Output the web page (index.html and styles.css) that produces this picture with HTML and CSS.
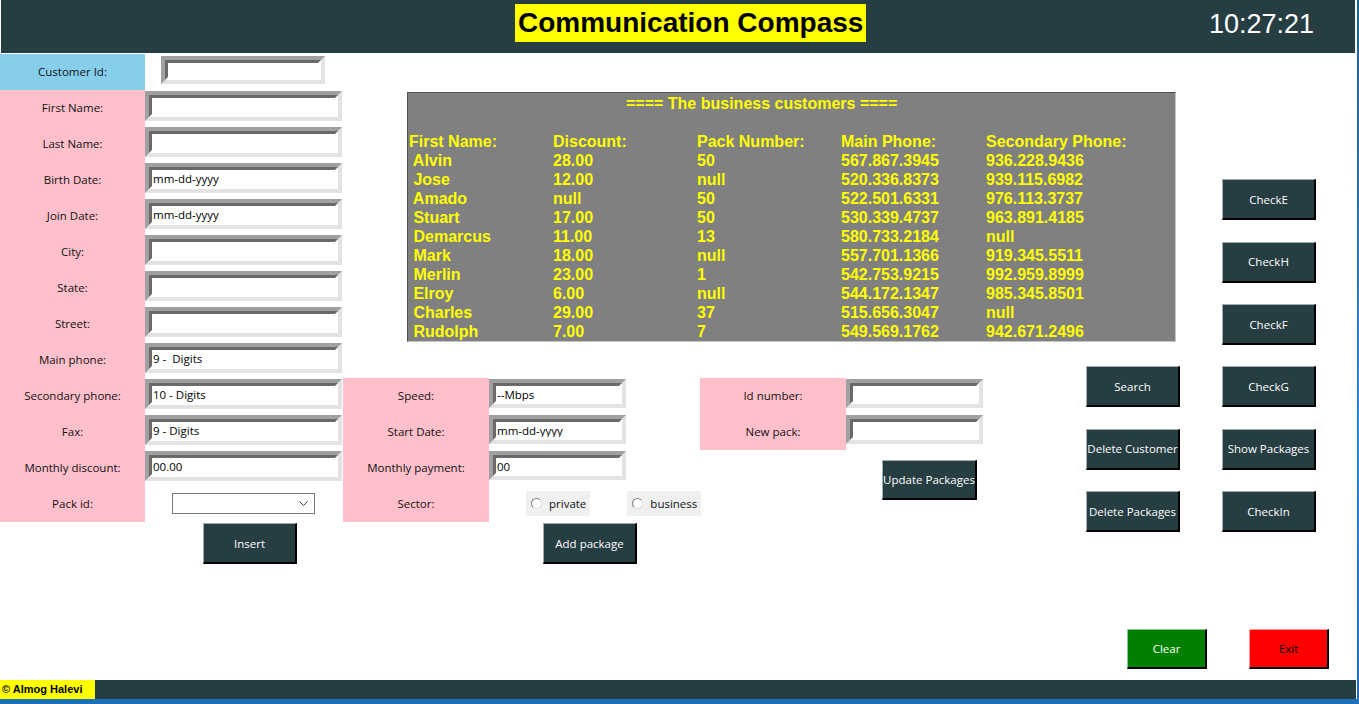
FILE: index.html
```html
<!DOCTYPE html>
<html lang="en">
<head>
<meta charset="utf-8">
<title>Communication Compass</title>
<link rel="stylesheet" href="styles.css">
</head>
<body>
<div class="app">
  <header class="topbar">
    <h1 class="title">Communication Compass</h1>
    <div class="clock">10:27:21</div>
  </header>

  <main class="main">
    <section class="left-form">
      <div class="row"><div class="lbl lbl-blue">Customer Id:</div><span class="entry entry-id"><input class="field" type="text" value=""></span></div>
      <div class="row"><div class="lbl">First Name:</div><span class="entry"><input class="field" type="text" value=""></span></div>
      <div class="row"><div class="lbl">Last Name:</div><span class="entry"><input class="field" type="text" value=""></span></div>
      <div class="row"><div class="lbl">Birth Date:</div><span class="entry"><input class="field" type="text" value="mm-dd-yyyy"></span></div>
      <div class="row"><div class="lbl">Join Date:</div><span class="entry"><input class="field" type="text" value="mm-dd-yyyy"></span></div>
      <div class="row"><div class="lbl">City:</div><span class="entry"><input class="field" type="text" value=""></span></div>
      <div class="row"><div class="lbl">State:</div><span class="entry"><input class="field" type="text" value=""></span></div>
      <div class="row"><div class="lbl">Street:</div><span class="entry"><input class="field" type="text" value=""></span></div>
      <div class="row"><div class="lbl">Main phone:</div><span class="entry"><input class="field" type="text" value="9 -  Digits"></span></div>
      <div class="row"><div class="lbl">Secondary phone:</div><span class="entry"><input class="field" type="text" value="10 - Digits"></span></div>
      <div class="row"><div class="lbl">Fax:</div><span class="entry"><input class="field" type="text" value="9 - Digits"></span></div>
      <div class="row"><div class="lbl">Monthly discount:</div><span class="entry"><input class="field" type="text" value="00.00"></span></div>
      <div class="row"><div class="lbl">Pack id:</div>
        <div class="combo"><svg class="chev" width="9" height="5" viewBox="0 0 9 5"><polyline points="0.5,0.5 4.5,4.5 8.5,0.5" fill="none" stroke="#404040" stroke-width="1"/></svg></div>
      </div>
      <button class="btn btn-insert">Insert</button>
    </section>

    <section class="center">
      <div class="top-row">
        <div class="report">
          <div class="report-title">==== The business customers ====</div>
          <div class="report-blank"></div>
          <div class="report-grid">
            <span>First Name:</span><span>Discount:</span><span>Pack Number:</span><span>Main Phone:</span><span>Secondary Phone:</span>
            <span> Alvin</span><span>28.00</span><span>50</span><span>567.867.3945</span><span>936.228.9436</span>
            <span> Jose</span><span>12.00</span><span>null</span><span>520.336.8373</span><span>939.115.6982</span>
            <span> Amado</span><span>null</span><span>50</span><span>522.501.6331</span><span>976.113.3737</span>
            <span> Stuart</span><span>17.00</span><span>50</span><span>530.339.4737</span><span>963.891.4185</span>
            <span> Demarcus</span><span>11.00</span><span>13</span><span>580.733.2184</span><span>null</span>
            <span> Mark</span><span>18.00</span><span>null</span><span>557.701.1366</span><span>919.345.5511</span>
            <span> Merlin</span><span>23.00</span><span>1</span><span>542.753.9215</span><span>992.959.8999</span>
            <span> Elroy</span><span>6.00</span><span>null</span><span>544.172.1347</span><span>985.345.8501</span>
            <span> Charles</span><span>29.00</span><span>37</span><span>515.656.3047</span><span>null</span>
            <span> Rudolph</span><span>7.00</span><span>7</span><span>549.569.1762</span><span>942.671.2496</span>
          </div>
        </div>
        <div class="btn-col btn-col-top">
          <button class="btn">CheckE</button>
          <button class="btn">CheckH</button>
          <button class="btn">CheckF</button>
        </div>
      </div>

      <div class="bottom-row">
        <div class="mid-form">
          <div class="row"><div class="lbl lbl-wide">Speed:</div><span class="entry entry-short"><input class="field" type="text" value="--Mbps"></span></div>
          <div class="row"><div class="lbl lbl-wide">Start Date:</div><span class="entry entry-short"><input class="field" type="text" value="mm-dd-yyyy"></span></div>
          <div class="row"><div class="lbl lbl-wide">Monthly payment:</div><span class="entry entry-short"><input class="field" type="text" value="00"></span></div>
          <div class="row"><div class="lbl lbl-wide">Sector:</div>
            <div class="radios">
              <label class="radio"><span class="dot"></span>private</label>
              <label class="radio"><span class="dot"></span>business</label>
            </div>
          </div>
          <button class="btn btn-add">Add package</button>
        </div>

        <div class="id-form">
          <div class="row"><div class="lbl lbl-wide">Id number:</div><span class="entry entry-short"><input class="field" type="text" value=""></span></div>
          <div class="row"><div class="lbl lbl-wide">New pack:</div><span class="entry entry-short"><input class="field" type="text" value=""></span></div>
          <button class="btn btn-update">Update Packages</button>
        </div>

        <div class="btn-col btn-col-search">
          <button class="btn">Search</button>
          <button class="btn">Delete Customer</button>
          <button class="btn">Delete Packages</button>
        </div>

        <div class="btn-col">
          <button class="btn">CheckG</button>
          <button class="btn">Show Packages</button>
          <button class="btn">CheckIn</button>
        </div>
      </div>

      <div class="actions">
        <button class="btn btn-clear">Clear</button>
        <button class="btn btn-exit">Exit</button>
      </div>
    </section>
  </main>

  <footer class="footer"><span class="copy">© Almog Halevi</span></footer>
</div>
</body>
</html>
```

FILE: styles.css
```css
html, body {
  margin: 0;
  padding: 0;
}

body {
  width: 1359px;
  height: 704px;
  overflow: hidden;
  background: linear-gradient(to bottom, #1f5f9c 0, #2f86cf 60%, #1d6fb8 100%);
  font-family: "Open Sans", "Noto Sans", sans-serif;
}

.app {
  width: 1357px;
  height: 699px;
  background: #ffffff;
  display: flex;
  flex-direction: column;
}

/* ---------- header ---------- */
.topbar {
  height: 53px;
  margin: 0 2px 0 1px;
  background: #263d42;
  display: flex;
  align-items: flex-start;
  padding-left: 514px;
  box-sizing: border-box;
}

.title {
  margin: 4px 0 0 0;
  padding: 0 3px;
  background: #ffff00;
  color: #000000;
  font-family: "Liberation Sans", Arial, sans-serif;
  font-weight: bold;
  font-size: 28px;
  line-height: 38px;
  white-space: nowrap;
}

.clock {
  margin-left: auto;
  margin-right: 41px;
  color: #ffffff;
  font-family: "Liberation Sans", Arial, sans-serif;
  font-size: 27px;
  line-height: 49px;
}

/* ---------- main ---------- */
.main {
  margin-top: 1px;
  height: 626px;
  display: flex;
}

.left-form {
  width: 343px;
  display: flex;
  flex-direction: column;
}

.row {
  height: 36px;
  display: flex;
  align-items: flex-start;
}

.lbl {
  box-sizing: border-box;
  width: 145px;
  height: 36px;
  flex: none;
  padding-bottom: 2px;
  background: #ffc0cb;
  color: #111111;
  font-size: 11.5px;
  display: flex;
  align-items: center;
  justify-content: center;
  white-space: nowrap;
}

.lbl-blue {
  background: #87ceeb;
}

.lbl-wide {
  width: 146px;
}

/* sunken Tk entry */
.entry {
  display: block;
  box-sizing: border-box;
  width: 197px;
  height: 30px;
  margin-top: 1px;
  border: 4px solid;
  border-color: #a0a0a0 #e3e3e3 #e3e3e3 #a0a0a0;
  background: #ffffff;
}

.entry-id {
  width: 164px;
  height: 28px;
  margin-top: 2px;
  margin-left: 16px;
}

.entry-short {
  width: 137px;
  height: 29px;
}

.field {
  display: block;
  box-sizing: border-box;
  width: 100%;
  height: 100%;
  margin: 0;
  border: 3px solid;
  border-color: #696969 #ffffff #ffffff #696969;
  padding: 1px 0 0 1px;
  background: #ffffff;
  color: #000000;
  font-family: "Open Sans", "Noto Sans", sans-serif;
  font-size: 11.5px;
  outline: none;
}

.entry-short .field {
  padding-top: 2px;
}

.combo {
  box-sizing: border-box;
  width: 143px;
  height: 21px;
  margin: 7px 0 0 27px;
  border: 1px solid #7a7a7a;
  background: #ffffff;
  display: flex;
  align-items: center;
  justify-content: flex-end;
  padding-right: 6px;
}

.chev {
  display: block;
}

/* ---------- buttons ---------- */
.btn {
  box-sizing: border-box;
  width: 94px;
  height: 41px;
  padding: 0;
  margin: 0;
  background: #263d42;
  color: #ffffff;
  border-style: solid;
  border-width: 1px 2px 2px 1px;
  border-color: #9fabad #000000 #000000 #9fabad;
  font-family: "Open Sans", "Noto Sans", sans-serif;
  font-size: 11.5px;
  white-space: nowrap;
  flex: none;
}

.btn-insert {
  margin: 1px 0 0 203px;
}

.btn-add {
  margin: 1px 0 0 200px;
}

.btn-update {
  width: 95px;
  height: 40px;
  margin: 10px 0 0 182px;
}

.btn-col {
  display: flex;
  flex-direction: column;
  gap: 21.6px;
  width: 94px;
  flex: none;
}

.btn-col-top {
  margin-left: 46px;
  padding-top: 125px;
}

.btn-col-search {
  width: 136px;
}

.btn-clear,
.btn-exit {
  width: 80px;
  height: 40px;
  font-size: 11.5px;
}

.btn-clear {
  background: #008000;
  color: #ffffff;
  border-color: #8fc08f #000000 #000000 #8fc08f;
}

.btn-exit {
  background: #ff0000;
  color: #000000;
  border-color: #ff9a9a #000000 #000000 #ff9a9a;
}

/* ---------- center ---------- */
.center {
  width: 1013px;
  display: flex;
  flex-direction: column;
}

.top-row {
  height: 312px;
  display: flex;
  align-items: flex-start;
}

.report {
  box-sizing: border-box;
  width: 769px;
  height: 250px;
  margin: 38px 0 0 64px;
  padding: 1px 0 0 1px;
  border: 1px solid;
  border-color: #505050 #c4c4c4 #c4c4c4 #505050;
  background: #808080;
  color: #ffff00;
  font-family: "Liberation Sans", Arial, sans-serif;
  font-weight: bold;
  font-size: 16px;
  line-height: 19px;
  flex: none;
}

.report-title {
  padding-left: 217px;
  white-space: pre;
}

.report-blank {
  height: 19px;
}

.report-grid {
  display: grid;
  grid-template-columns: 144px 144px 144px 145px 144px;
}

.report-grid span {
  white-space: pre;
}

.bottom-row {
  display: flex;
  align-items: flex-start;
}

.mid-form {
  width: 357px;
  padding-top: 12px;
  display: flex;
  flex-direction: column;
  flex: none;
}

.id-form {
  width: 386px;
  padding-top: 12px;
  display: flex;
  flex-direction: column;
  flex: none;
}

.radios {
  display: flex;
  gap: 37px;
  margin: 5px 0 0 37px;
}

.radio {
  box-sizing: border-box;
  height: 25px;
  background: #f0f0f0;
  display: flex;
  align-items: center;
  padding: 0 4px 0 5px;
  gap: 7px;
  font-size: 11.5px;
  color: #111111;
}

.dot {
  box-sizing: border-box;
  width: 11px;
  height: 11px;
  border-radius: 50%;
  border: 1px solid;
  border-color: #7f7f7f #dcdcdc #dcdcdc #7f7f7f;
  background: #ffffff;
}

.actions {
  margin-top: auto;
  padding: 0 27px 11px 0;
  display: flex;
  justify-content: flex-end;
  gap: 42px;
}

/* ---------- footer ---------- */
.footer {
  height: 19px;
  margin-right: 1px;
  background: #263d42;
  display: flex;
}

.copy {
  width: 95px;
  background: #ffff00;
  color: #000000;
  font-family: "Liberation Sans", Arial, sans-serif;
  font-weight: bold;
  font-size: 11px;
  line-height: 19px;
  padding-left: 2px;
  box-sizing: border-box;
  white-space: nowrap;
}
```
